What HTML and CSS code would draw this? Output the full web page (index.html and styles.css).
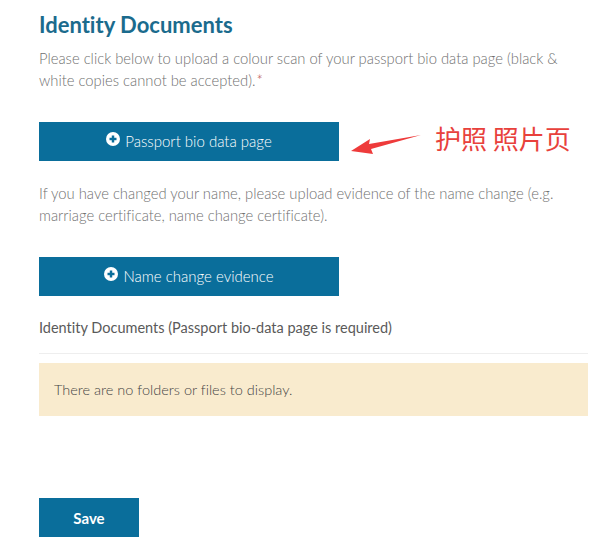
FILE: index.html
```html
<!DOCTYPE html>
<html lang="en">
<head>
    <meta charset="UTF-8">
    <meta name="viewport" content="width=device-width, initial-scale=1.0">
    <title>Identity Documents</title>
    <link rel="stylesheet" href="styles.css">
</head>
<body>
    <div class="container">
        <h2 class="title">Identity Documents</h2>
        <p class="help">Please click below to upload a colour scan of your passport bio data page (black &amp; white copies cannot be accepted).<span class="required">*</span></p>

        <div class="upload-row">
            <button class="upload-btn">
                <svg class="plus" viewBox="0 0 16 16" width="14" height="14">
                    <circle cx="8" cy="8" r="8" fill="#fff"/>
                    <rect x="4" y="6.6" width="8" height="2.8" fill="#0a6e9b"/>
                    <rect x="6.6" y="4" width="2.8" height="8" fill="#0a6e9b"/>
                </svg>
                Passport bio data page
            </button>
            <div class="note">
                <svg class="arrow" viewBox="0 0 80 30" width="80" height="30">
                    <path d="M72 6 L20 15 L21 10 L2 22 L24 25 L22 20 Z" fill="#ee3b3b"/>
                </svg>
                <span class="note-text">护照 照片页</span>
            </div>
        </div>

        <p class="help">If you have changed your name, please upload evidence of the name change (e.g. marriage certificate, name change certificate).</p>

        <button class="upload-btn second">
            <svg class="plus" viewBox="0 0 16 16" width="14" height="14">
                <circle cx="8" cy="8" r="8" fill="#fff"/>
                <rect x="4" y="6.6" width="8" height="2.8" fill="#0a6e9b"/>
                <rect x="6.6" y="4" width="2.8" height="8" fill="#0a6e9b"/>
            </svg>
            Name change evidence
        </button>

        <div class="folder-label">Identity Documents (Passport bio-data page is required)</div>
        <div class="alert">There are no folders or files to display.</div>

        <button class="save-btn">Save</button>
    </div>
</body>
</html>
```

FILE: styles.css
```css
body {
    font-family: Lato, "Noto Sans CJK SC", sans-serif;
    font-variant-ligatures: none;
    margin: 0;
    background: #fff;
}

.container {
    padding: 10px 22px 0 39px;
}

.title {
    margin: 0;
    font-size: 22px;
    font-weight: 700;
    color: #1b6b8d;
    line-height: 30px;
}

.help {
    margin: 7px 0 0;
    font-size: 14.8px;
    font-weight: 300;
    color: #707070;
    line-height: 22px;
}

.required {
    color: #b94a48;
    margin-left: 1px;
}

.upload-row {
    display: flex;
    align-items: center;
    margin-top: 31px;
}

.upload-btn {
    width: 300px;
    height: 39px;
    background: #0a6e9b;
    color: #fff;
    border: none;
    font-family: Lato, sans-serif;
    font-size: 15px;
    font-weight: 300;
    display: flex;
    align-items: center;
    justify-content: center;
    gap: 5px;
    padding: 0 0 2px;
}

.plus {
    margin-top: -3px;
}

.note {
    display: flex;
    align-items: center;
    margin-left: 10px;
}

.arrow {
    margin-top: 4px;
}

.note-text {
    margin-left: 6px;
    font-family: "Noto Sans CJK SC", sans-serif;
    font-size: 26px;
    color: #e8413c;
    margin-top: -8px;
}

.upload-row + .help {
    margin-top: 21px;
}

.second {
    margin-top: 31px;
}

.folder-label {
    margin-top: 22px;
    font-size: 14.5px;
    font-weight: 400;
    color: #5a5a5a;
    line-height: 20px;
    padding-bottom: 15px;
    border-bottom: 1px solid #eee;
}

.alert {
    margin-top: 9px;
    height: 53px;
    background: #f9ebce;
    color: #444;
    font-size: 14.5px;
    font-weight: 300;
    display: flex;
    align-items: center;
    padding-left: 15px;
}

.save-btn {
    margin-top: 82px;
    width: 100px;
    height: 39px;
    background: #0a6e9b;
    color: #fff;
    border: none;
    font-family: Lato, sans-serif;
    font-size: 15px;
    font-weight: 700;
}
```
